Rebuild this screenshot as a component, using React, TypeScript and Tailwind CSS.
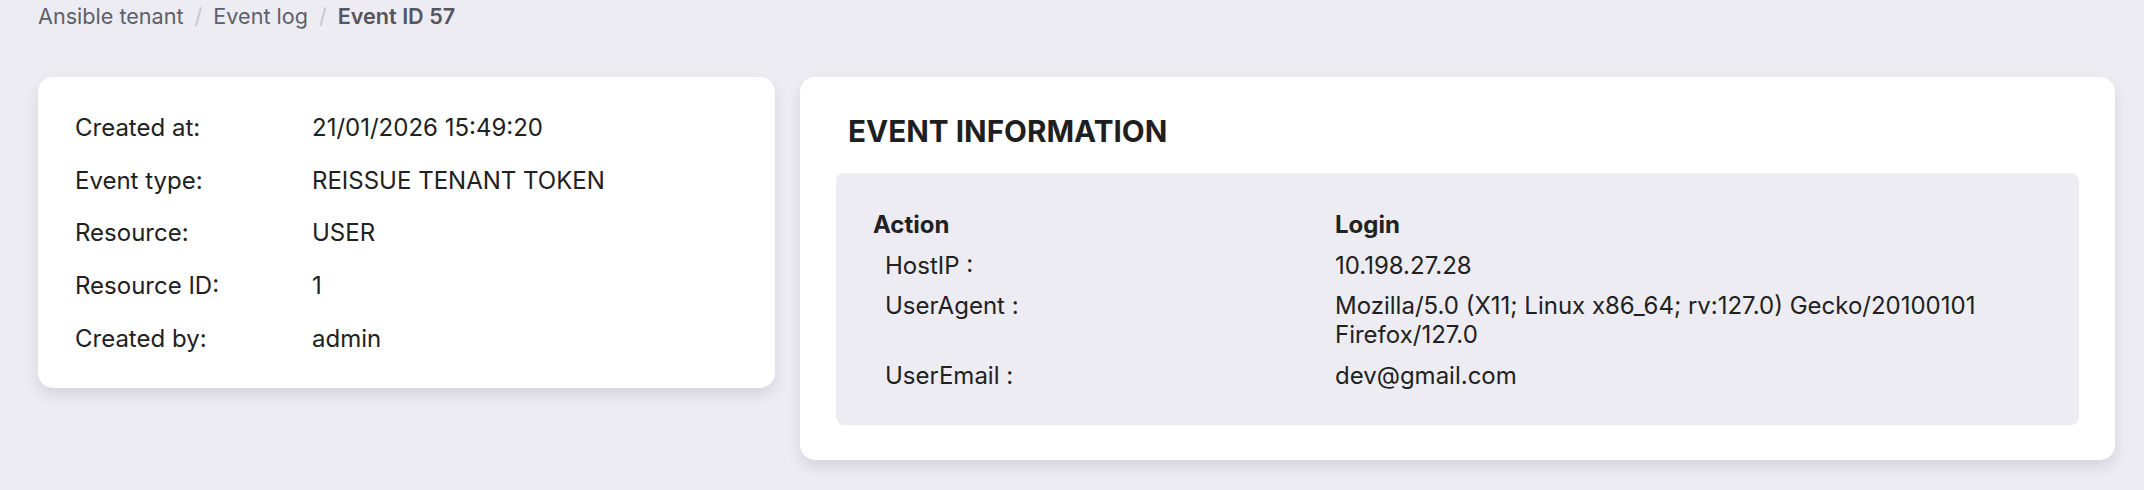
import React from "react";

const rows: [string, string][] = [
  ["Created at:", "21/01/2026 15:49:20"],
  ["Event type:", "REISSUE TENANT TOKEN"],
  ["Resource:", "USER"],
  ["Resource ID:", "1"],
  ["Created by:", "admin"],
];

const info: [string, string][] = [
  ["HostIP :", "10.198.27.28"],
  ["UserAgent :", "Mozilla/5.0 (X11; Linux x86_64; rv:127.0) Gecko/20100101 Firefox/127.0"],
  ["UserEmail :", "dev@gmail.com"],
];

export default function App() {
  return (
    <div
      className="min-h-[490px] w-full bg-[#edecf2] pl-[38px] pr-[29px] pt-[2px] text-[#212121]"
      style={{ fontFamily: "Inter, 'Noto Sans', sans-serif" }}
    >
      <nav className="flex items-center text-[21.6px] leading-[29px] text-[#5f5f69]">
        <span>Ansible tenant</span>
        <span className="px-[11px] text-[#c6c6ce]">/</span>
        <span>Event log</span>
        <span className="px-[11px] text-[#c6c6ce]">/</span>
        <span className="font-semibold text-[#55555e]">Event ID 57</span>
      </nav>

      <div className="mt-[46px] flex items-start gap-[25px]">
        <div className="w-[737px] rounded-[15px] bg-white pl-[37px] pr-[37px] pt-[24px] pb-[23px] shadow-[0_7px_14px_rgba(90,90,130,0.16)]">
          {rows.map(([k, v]) => (
            <div key={k} className="flex h-[52.75px] items-center text-[24px] leading-[29px]">
              <div className="w-[237px] shrink-0">{k}</div>
              <div>{v}</div>
            </div>
          ))}
        </div>

        <div className="flex-1 rounded-[15px] bg-white px-[36px] pt-[36px] pb-[35px] shadow-[0_7px_14px_rgba(90,90,130,0.16)]">
          <h2 className="pl-[12px] text-[29.7px] font-bold leading-[37px] text-[#1f1f1f]">
            EVENT INFORMATION
          </h2>
          <div className="mt-[23px] rounded-[8px] bg-[#edecf2] pl-[37px] pr-[36px] pt-[37px] pb-[35.5px] text-[24px] leading-[29px]">
            <div className="flex font-bold">
              <div className="w-[462px] shrink-0">Action</div>
              <div>Login</div>
            </div>
            {info.map(([k, v]) => (
              <div key={k} className="mt-[11.5px] flex">
                <div className="w-[462px] shrink-0 pl-[12px]">{k}</div>
                <div className="min-w-0 flex-1">{v}</div>
              </div>
            ))}
          </div>
        </div>
      </div>
    </div>
  );
}
